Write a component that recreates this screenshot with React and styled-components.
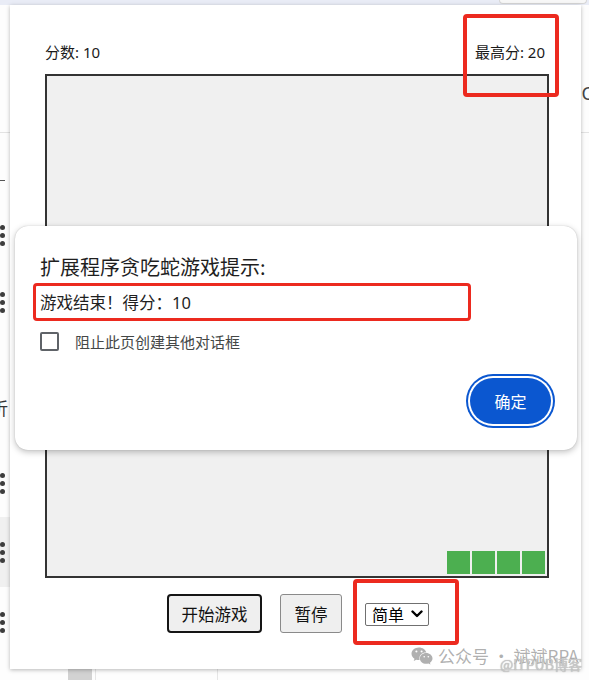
import React from "react"
import styled, { createGlobalStyle } from "styled-components"
import { FaWeixin } from "react-icons/fa"

const GlobalStyle = createGlobalStyle`
  html, body {
    margin: 0;
    padding: 0;
  }
  body {
    background: #fff;
    font-family: "Noto Sans", "Noto Sans CJK SC", sans-serif;
  }
  * {
    box-sizing: border-box;
  }
`

const Page = styled.div`
  position: relative;
  width: 589px;
  height: 680px;
  overflow: hidden;
  background: #fdfdfd;
  display: flex;
  flex-direction: column;
`

const TopStrip = styled.div`
  height: 5px;
  background: #e9ecf6;
  display: flex;
  justify-content: flex-end;
`

const Pill = styled.div`
  width: 88px;
  height: 4px;
  margin-right: 2px;
  background: #f7f7f7;
  border: 1px solid #d6d6d6;
  border-top: none;
  border-radius: 0 0 12px 12px;
`

const Header = styled.div`
  height: 128px;
  border-bottom: 1px solid #e3e3e3;
  display: flex;
  justify-content: flex-end;
  padding-top: 78px;
`

const EdgeGlyph = styled.span`
  font-size: 18px;
  line-height: 20px;
  color: #444;
  margin-right: -4px;
`

const Body = styled.div`
  flex: 1;
  display: flex;
`

const LeftRail = styled.div`
  width: 10px;
  display: flex;
  flex-direction: column;
  overflow: hidden;
`

const RailRow = styled.div`
  height: ${(p) => p.$h}px;
  flex: none;
  display: flex;
  align-items: center;
  justify-content: ${(p) => (p.$end ? "flex-end" : "flex-start")};
  background: ${(p) => (p.$shade ? "#f0f0f0" : "transparent")};
`

const Kebab = styled.div`
  display: flex;
  flex-direction: column;
  gap: 3px;
  & > i {
    width: 5px;
    height: 5px;
    border-radius: 50%;
    background: #3d3d3d;
  }
`

const Dash = styled.div`
  width: 5px;
  height: 1px;
  background: #555;
`

const RailText = styled.span`
  font-family: "Noto Sans CJK SC", sans-serif;
  font-size: 17px;
  line-height: 20px;
  color: #333;
  margin-right: 2px;
`

const Middle = styled.div`
  flex: 1;
  display: flex;
  flex-direction: column;
  justify-content: flex-end;
`

const BottomStrip = styled.div`
  height: 11px;
  display: flex;
  padding-left: 58px;
`

const Thumb = styled.div`
  width: 24px;
  background: #d2d2d2;
`

const StripLine = styled.div`
  width: 1px;
  margin-left: ${(p) => p.$gap}px;
  background: #e6e6e6;
`

const RightRail = styled.div`
  width: 8px;
`

const Popup = styled.div`
  position: absolute;
  left: 10px;
  top: 5px;
  width: 571px;
  height: 664px;
  background: #fff;
  box-shadow: 0 1px 4px rgba(0, 0, 0, 0.28);
  padding: 37px 35px 0;
  display: flex;
  flex-direction: column;
`

const ScoreRow = styled.div`
  width: 500px;
  display: flex;
  justify-content: space-between;
  font-size: 15px;
  line-height: 20px;
  color: #1a1a1a;
`

const Board = styled.div`
  width: 504px;
  height: 504px;
  margin-top: 12px;
  border: 2px solid #333;
  background: #f0f0f0;
  display: grid;
  grid-template-columns: repeat(20, 25px);
  grid-template-rows: repeat(20, 25px);
`

const Segment = styled.div`
  grid-column: ${(p) => p.$x + 1};
  grid-row: ${(p) => p.$y + 1};
  width: 23px;
  height: 23px;
  background: #4caf50;
`

const Controls = styled.div`
  margin-top: 16px;
  padding-left: 5px;
  display: flex;
  justify-content: center;
  align-items: center;
`

const GameButton = styled.button`
  height: 39px;
  padding: 0 ${(p) => (p.$focused ? 12.5 : 13.5)}px;
  margin-right: ${(p) => p.$space}px;
  font-family: "Noto Sans CJK SC", sans-serif;
  font-size: 16.5px;
  color: #111;
  background: #efefef;
  border: ${(p) => (p.$focused ? "2px solid #151515" : "1px solid #8a8a8a")};
  border-radius: ${(p) => (p.$focused ? 4 : 3)}px;
`

const SelectBox = styled.label`
  height: 23px;
  margin-top: 1px;
  display: inline-flex;
  align-items: center;
  gap: 6px;
  padding: 0 5px 0 6px;
  border: 1px solid #707070;
  border-radius: 2px;
  background: #fff;
`

const Select = styled.select`
  appearance: none;
  border: none;
  background: transparent;
  padding: 0;
  font-family: "Noto Sans CJK SC", sans-serif;
  font-size: 16px;
  line-height: 21px;
  color: #000;
  outline: none;
`

const Dialog = styled.div`
  position: absolute;
  left: 15px;
  top: 226px;
  width: 562px;
  height: 224px;
  background: #fff;
  border-radius: 13px;
  box-shadow: 0 2px 6px rgba(0, 0, 0, 0.25), 0 0 1px rgba(0, 0, 0, 0.25);
  padding: 28px 22px 22px 25px;
  display: flex;
  flex-direction: column;
`

const DialogTitle = styled.div`
  font-family: "Noto Sans CJK SC", sans-serif;
  font-size: 20px;
  line-height: 26px;
  color: #1f1f1f;
`

const DialogMessage = styled.div`
  margin-top: 12px;
  font-family: "Noto Sans", "Noto Sans CJK SC", sans-serif;
  font-size: 16.5px;
  line-height: 22px;
  color: #1f1f1f;
`

const CheckRow = styled.label`
  margin-top: 18px;
  display: flex;
  align-items: center;
  gap: 16px;
  font-family: "Noto Sans CJK SC", sans-serif;
  font-size: 15px;
  line-height: 19px;
  color: #444746;
`

const CheckBox = styled.input`
  appearance: none;
  margin: 0;
  width: 19px;
  height: 19px;
  border: 2px solid #5f6368;
  border-radius: 2px;
  background: #fff;
`

const DialogFooter = styled.div`
  margin-top: auto;
  display: flex;
  justify-content: flex-end;
`

const OkButton = styled.button`
  width: 81px;
  height: 46px;
  margin: 4px;
  border: none;
  border-radius: 23px;
  background: #0b57d0;
  color: #fff;
  font-family: "Noto Sans CJK SC", sans-serif;
  font-size: 16px;
  box-shadow: 0 0 0 2px #fff, 0 0 0 4px #0b57d0;
`

const Mark = styled.div`
  position: absolute;
  left: ${(p) => p.$x}px;
  top: ${(p) => p.$y}px;
  width: ${(p) => p.$w}px;
  height: ${(p) => p.$h}px;
  border: ${(p) => p.$t}px solid #ec2a1f;
  border-radius: 4px;
  pointer-events: none;
`

const WatermarkMain = styled.div`
  position: absolute;
  left: 411px;
  top: 645px;
  display: flex;
  align-items: center;
  gap: 5px;
  font-family: "Noto Sans CJK SC", sans-serif;
  font-size: 17px;
  line-height: 22px;
  color: rgba(150, 150, 150, 0.75);
  white-space: nowrap;
`

const WatermarkSub = styled.div`
  position: absolute;
  left: 500px;
  top: 655px;
  font-family: "Noto Sans CJK SC", sans-serif;
  font-size: 14px;
  line-height: 18px;
  color: rgba(205, 205, 205, 0.9);
  text-shadow: 0 0 1px #999;
  white-space: nowrap;
`

const railRows = [
  { h: 37 },
  { h: 20, kind: "dash" },
  { h: 11 },
  { h: 68, kind: "kebab" },
  { h: 67, kind: "kebab" },
  { h: 38 },
  { h: 68, kind: "text" },
  { h: 7 },
  { h: 68, kind: "kebab" },
  { h: 70, kind: "kebab", shade: true },
  { h: 70, kind: "kebab" },
]

const snake = [16, 17, 18, 19].map((x) => ({ x, y: 19 }))

const Chevron = () => (
  <svg width="12" height="8" viewBox="0 0 12 8">
    <path
      d="M1.5 1.5 L6 6 L10.5 1.5"
      fill="none"
      stroke="#000"
      strokeWidth="2.4"
      strokeLinecap="round"
      strokeLinejoin="round"
    />
  </svg>
)

const App = () => {
  return (
    <>
      <GlobalStyle />
      <Page>
        <TopStrip>
          <Pill />
        </TopStrip>
        <Header>
          <EdgeGlyph>C</EdgeGlyph>
        </Header>
        <Body>
          <LeftRail>
            {railRows.map((row, i) => (
              <RailRow key={i} $h={row.h} $shade={row.shade} $end={row.kind === "text"}>
                {row.kind === "kebab" && (
                  <Kebab>
                    <i />
                    <i />
                    <i />
                  </Kebab>
                )}
                {row.kind === "dash" && <Dash />}
                {row.kind === "text" && <RailText>折</RailText>}
              </RailRow>
            ))}
          </LeftRail>
          <Middle>
            <BottomStrip>
              <Thumb />
              <StripLine $gap={3} />
              <StripLine $gap={121} />
            </BottomStrip>
          </Middle>
          <RightRail />
        </Body>

        <Popup>
          <ScoreRow>
            <span>分数: 10</span>
            <span>最高分: 20</span>
          </ScoreRow>
          <Board>
            {snake.map((s) => (
              <Segment key={s.x} $x={s.x} $y={s.y} />
            ))}
          </Board>
          <Controls>
            <GameButton $focused $space={18}>开始游戏</GameButton>
            <GameButton $space={23}>暂停</GameButton>
            <SelectBox>
              <Select defaultValue="easy">
                <option value="easy">简单</option>
                <option value="medium">中等</option>
                <option value="hard">困难</option>
              </Select>
              <Chevron />
            </SelectBox>
          </Controls>
        </Popup>

        <Dialog>
          <DialogTitle>扩展程序贪吃蛇游戏提示:</DialogTitle>
          <DialogMessage>游戏结束！得分：10</DialogMessage>
          <CheckRow>
            <CheckBox type="checkbox" />
            阻止此页创建其他对话框
          </CheckRow>
          <DialogFooter>
            <OkButton>确定</OkButton>
          </DialogFooter>
        </Dialog>

        <Mark $x={463} $y={14} $w={96} $h={83} $t={4} />
        <Mark $x={33} $y={283} $w={438} $h={38} $t={3.5} />
        <Mark $x={353} $y={579} $w={106} $h={66} $t={4} />

        <WatermarkMain>
          <FaWeixin size={22} />
          <span>公众号 · 斌斌RPA</span>
        </WatermarkMain>
        <WatermarkSub>@ITPUB博客</WatermarkSub>
      </Page>
    </>
  )
}

export default App
